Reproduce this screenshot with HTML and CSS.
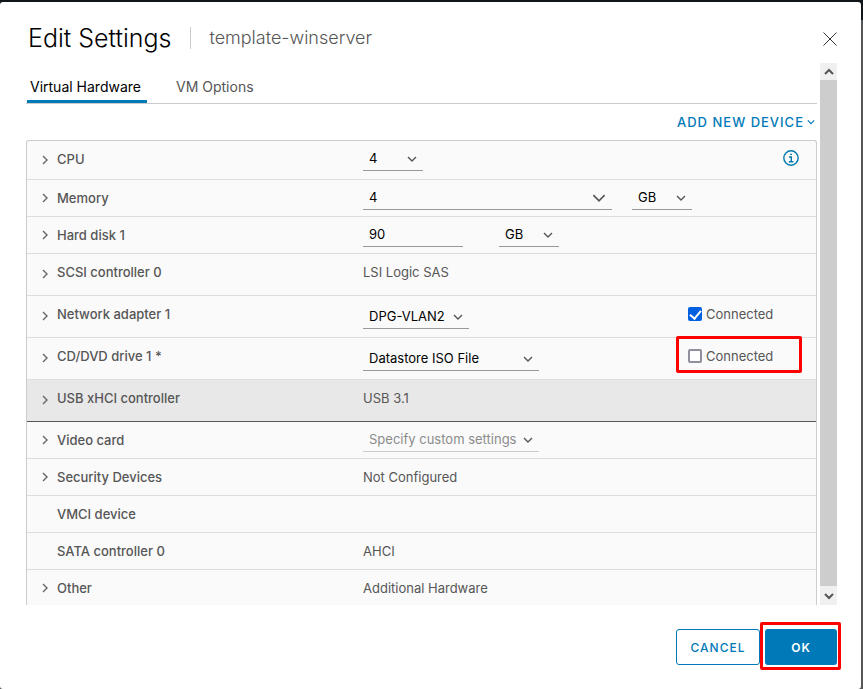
FILE: index.html
```html
<!DOCTYPE html>
<html lang="en">
<head>
<meta charset="utf-8">
<title>Edit Settings</title>
<link rel="stylesheet" href="styles.css">
</head>
<body>
<svg class="defs" aria-hidden="true">
  <symbol id="down" viewBox="0 0 10 10"><path d="M1 3l4 4 4-4"/></symbol>
  <symbol id="right" viewBox="0 0 10 10"><path d="M3 1l4 4-4 4"/></symbol>
</svg>
<main class="dialog" role="dialog" aria-labelledby="title">
  <header class="head">
    <h1 id="title">Edit Settings</h1>
    <h2>template-winserver</h2>
    <button class="close" aria-label="Close"><svg viewBox="0 0 14 14"><path d="M0.5 0.5l13 13M13.5 0.5l-13 13"/></svg></button>
  </header>

  <div class="body">
    <div class="content">
      <nav class="tabs" role="tablist">
        <button class="tab active" role="tab" aria-selected="true">Virtual Hardware</button>
        <button class="tab" role="tab" aria-selected="false">VM Options</button>
      </nav>
      <div class="toolbar"><button class="add">ADD NEW DEVICE <svg class="chev small"><use href="#down"/></svg></button></div>

      <section class="devices">
        <div class="row cpu">
          <div class="name"><button class="exp" aria-label="Expand CPU"><svg class="chev"><use href="#right"/></svg></button><label for="cpu">CPU</label></div>
          <div class="value"><span class="pick w60"><select id="cpu"><option>4</option></select><svg class="chev"><use href="#down"/></svg></span></div>
          <div class="extra end"><button class="info" aria-label="CPU information"><svg viewBox="0 0 16 16"><circle cx="8" cy="8" r="7.2"/><path d="M6 7h2.3v4.6M5.8 11.7h4.6M7.2 4.4h1.8"/></svg></button></div>
        </div>
        <div class="row">
          <div class="name"><button class="exp" aria-label="Expand Memory"><svg class="chev"><use href="#right"/></svg></button><label for="mem">Memory</label></div>
          <div class="value gap20"><span class="pick wide"><input id="mem" type="text" value="4"><svg class="chev large"><use href="#down"/></svg></span><span class="pick w60"><select aria-label="Memory unit"><option>GB</option></select><svg class="chev"><use href="#down"/></svg></span></div>
        </div>
        <div class="row">
          <div class="name"><button class="exp" aria-label="Expand Hard disk 1"><svg class="chev"><use href="#right"/></svg></button><label for="disk">Hard disk 1</label></div>
          <div class="value gap36"><span class="pick w100"><input id="disk" type="text" value="90"></span><span class="pick w60"><select aria-label="Disk unit"><option>GB</option></select><svg class="chev"><use href="#down"/></svg></span></div>
        </div>
        <div class="row tall">
          <div class="name"><button class="exp" aria-label="Expand SCSI controller 0"><svg class="chev"><use href="#right"/></svg></button><span>SCSI controller 0</span></div>
          <div class="value text">LSI Logic SAS</div>
        </div>
        <div class="row tall">
          <div class="name"><button class="exp" aria-label="Expand Network adapter 1"><svg class="chev"><use href="#right"/></svg></button><label for="net">Network adapter 1</label></div>
          <div class="value"><span class="pick w106"><select id="net"><option>DPG-VLAN2</option></select><svg class="chev"><use href="#down"/></svg></span></div>
          <div class="extra"><label class="check"><input type="checkbox" checked>Connected</label></div>
        </div>
        <div class="row tall">
          <div class="name"><button class="exp" aria-label="Expand CD/DVD drive 1"><svg class="chev"><use href="#right"/></svg></button><label for="cd">CD/DVD drive 1 *</label></div>
          <div class="value"><span class="pick w176"><select id="cd"><option>Datastore ISO File</option></select><svg class="chev"><use href="#down"/></svg></span></div>
          <div class="extra"><label class="check marked"><input type="checkbox">Connected</label></div>
        </div>
        <div class="row tall selected">
          <div class="name"><button class="exp" aria-label="Expand USB xHCI controller"><svg class="chev"><use href="#right"/></svg></button><span>USB xHCI controller</span></div>
          <div class="value text">USB 3.1</div>
        </div>
        <div class="row">
          <div class="name"><button class="exp" aria-label="Expand Video card"><svg class="chev"><use href="#right"/></svg></button><label for="video">Video card</label></div>
          <div class="value"><span class="pick w176 muted"><select id="video"><option>Specify custom settings</option></select><svg class="chev"><use href="#down"/></svg></span></div>
        </div>
        <div class="row">
          <div class="name"><button class="exp" aria-label="Expand Security Devices"><svg class="chev"><use href="#right"/></svg></button><span>Security Devices</span></div>
          <div class="value text">Not Configured</div>
        </div>
        <div class="row">
          <div class="name plain"><span>VMCI device</span></div>
        </div>
        <div class="row">
          <div class="name plain"><span>SATA controller 0</span></div>
          <div class="value text">AHCI</div>
        </div>
        <div class="row">
          <div class="name"><button class="exp" aria-label="Expand Other"><svg class="chev"><use href="#right"/></svg></button><span>Other</span></div>
          <div class="value text">Additional Hardware</div>
        </div>
      </section>
    </div>
    <div class="scroll" aria-hidden="true">
      <div class="arrow"><svg viewBox="0 0 10 8"><path d="M1 6l4-4 4 4"/></svg></div>
      <div class="thumb"></div>
      <div class="arrow"><svg viewBox="0 0 10 8"><path d="M1 2l4 4 4-4"/></svg></div>
    </div>
  </div>

  <footer class="foot">
    <button class="btn">CANCEL</button>
    <button class="btn primary marked">OK</button>
  </footer>
</main>
</body>
</html>
```
FILE: styles.css
```css
* { box-sizing: border-box; }

body {
  margin: 0;
  min-height: 100vh;
  padding: 2px 2px 0 0;
  background: linear-gradient(#10151a 20px, #565656 20px);
  color: #565656;
  font: 13px/18px Inter, "Open Sans", sans-serif;
}

button, input, select {
  margin: 0;
  padding: 0;
  border: 0;
  border-radius: 0;
  background: none;
  color: inherit;
  font: inherit;
}

svg { display: block; fill: none; stroke: currentColor; }
.defs { position: absolute; width: 0; height: 0; }

.chev { width: 10px; height: 10px; stroke-width: 1.4; }
.chev.small { width: 8px; height: 8px; }
.chev.large { width: 14px; height: 14px; stroke-width: 1.2; }

.dialog {
  display: flex;
  flex-direction: column;
  height: calc(100vh - 2px);
  padding: 0 24px 0 26px;
  border-radius: 3px;
  background: #fff;
}

/* Header */
.head {
  display: flex;
  align-items: center;
  flex: none;
  height: 61px;
  padding: 11px 0 0 2px;
}
h1, h2 { margin: 0; font-weight: 300; }
h1 { padding-right: 19px; color: #000; font-size: 25px; line-height: 24px; }
h2 { padding-left: 18px; border-left: 1px solid #ccc; font-size: 18px; line-height: 22px; }
.close { margin-left: auto; padding-top: 2px; color: #333; }
.close svg { width: 14px; height: 14px; }

/* Scrolling area */
.body { display: flex; flex: 1; min-height: 0; gap: 3px; }
.content { flex: 1; min-width: 0; overflow: hidden; }

.tabs {
  display: flex;
  gap: 26px;
  height: 41px;
  padding-left: 1px;
  border-bottom: 1px solid #ccc;
}
.tab {
  min-width: 84px;
  padding: 11px 3px 0;
  border-bottom: 3px solid transparent;
  font-size: 14px;
  text-align: left;
}
.tab.active { min-width: 120px; border-bottom-color: #0079b8; color: #000; }

.toolbar { display: flex; justify-content: flex-end; height: 36px; padding-right: 2px; }
.add { display: flex; align-items: center; gap: 3px; color: #0079b8; letter-spacing: 1px; font-weight: 500; }

.devices {
  border: 1px solid #ccc;
  border-bottom: 0;
  border-radius: 3px 3px 0 0;
  background: #fafafa;
}
.row {
  display: grid;
  grid-template-columns: minmax(0, 336fr) minmax(0, 325fr) minmax(0, 128fr);
  align-items: start;
  min-height: 37px;
  border-bottom: 1px solid #ddd;
}
.row.cpu { min-height: 39px; }
.row.tall { min-height: 42px; }
.row.selected { background: #e8e8e8; border-bottom-color: #565656; }

.name { display: flex; gap: 7px; padding: 9px 0 0 13px; font-weight: 500; }
.name.plain { padding-left: 30px; }
.exp { display: flex; align-items: center; height: 18px; color: #666; }
.tall .exp { height: 22px; }
.cpu .exp { height: 20px; }

.value { display: flex; padding-top: 6px; }
.tall .value { padding-top: 9px; }
.row .value.text { padding-top: 9px; }
.gap20 { gap: 20px; }
.gap36 { gap: 36px; }

.pick {
  display: grid;
  grid-template: 23px / 100%;
  align-items: center;
  flex: none;
  border-bottom: 1px solid #999;
  color: #000;
}
.pick > * { grid-area: 1 / 1; }
.pick select, .pick input { width: 100%; height: 23px; padding: 0 0 1px 6px; appearance: none; }
.pick .chev { justify-self: end; margin-right: 6px; color: #565656; pointer-events: none; }
.pick.muted { border-color: #ccc; color: #8c8c8c; }
.w60 { width: 60px; }
.w100 { width: 100px; }
.w106 { width: 106px; }
.w176 { width: 176px; }
.wide { width: 249px; }

.extra { display: flex; padding-top: 9px; }
.extra.end { justify-content: flex-end; padding-right: 17px; }
.info { color: #0079ad; }
.info svg { width: 16px; height: 16px; stroke-width: 1.4; }

.check { display: flex; align-items: center; gap: 4px; position: relative; }
.check input {
  width: 14px;
  height: 14px;
  border: 2px solid #8f8f9d;
  border-radius: 2px;
  background: #fff;
  appearance: none;
}
.check input:checked { display: grid; place-items: center; border-color: #0060df; background: #0060df; }
.check input:checked::before {
  content: "";
  width: 5px;
  height: 9px;
  border: solid #fff;
  border-width: 0 2px 2px 0;
  transform: translateY(-1px) rotate(40deg);
}

/* Red call-out frames */
.marked { position: relative; }
.marked::after {
  content: "";
  position: absolute;
  border: 3px solid #f00;
  border-radius: 2px;
  pointer-events: none;
}
.check.marked::after { inset: -11px -29px -8px -12px; }
.btn.marked::after { inset: -7px -4px -5px -5px; }

.scroll { display: flex; flex-direction: column; flex: none; width: 17px; }
.arrow { display: grid; place-items: center; height: 17px; background: #f0f0f0; color: #555; }
.arrow:last-child { height: 19px; }
.arrow svg { width: 10px; height: 8px; stroke-width: 2; }
.thumb { flex: 1; background: #cdcdcd; }

/* Footer */
.foot { display: flex; justify-content: flex-end; gap: 5px; flex: none; height: 84px; padding-top: 24px; }
.btn {
  width: 84px;
  height: 36px;
  padding-top: 1px;
  border: 1px solid #0079b8;
  border-radius: 3px;
  color: #0079b8;
  font-size: 12px;
  font-weight: 500;
  letter-spacing: 1px;
}
.btn.primary { width: 72px; border: 0; background: #0079b8; color: #fff; font-weight: 600; }
```
